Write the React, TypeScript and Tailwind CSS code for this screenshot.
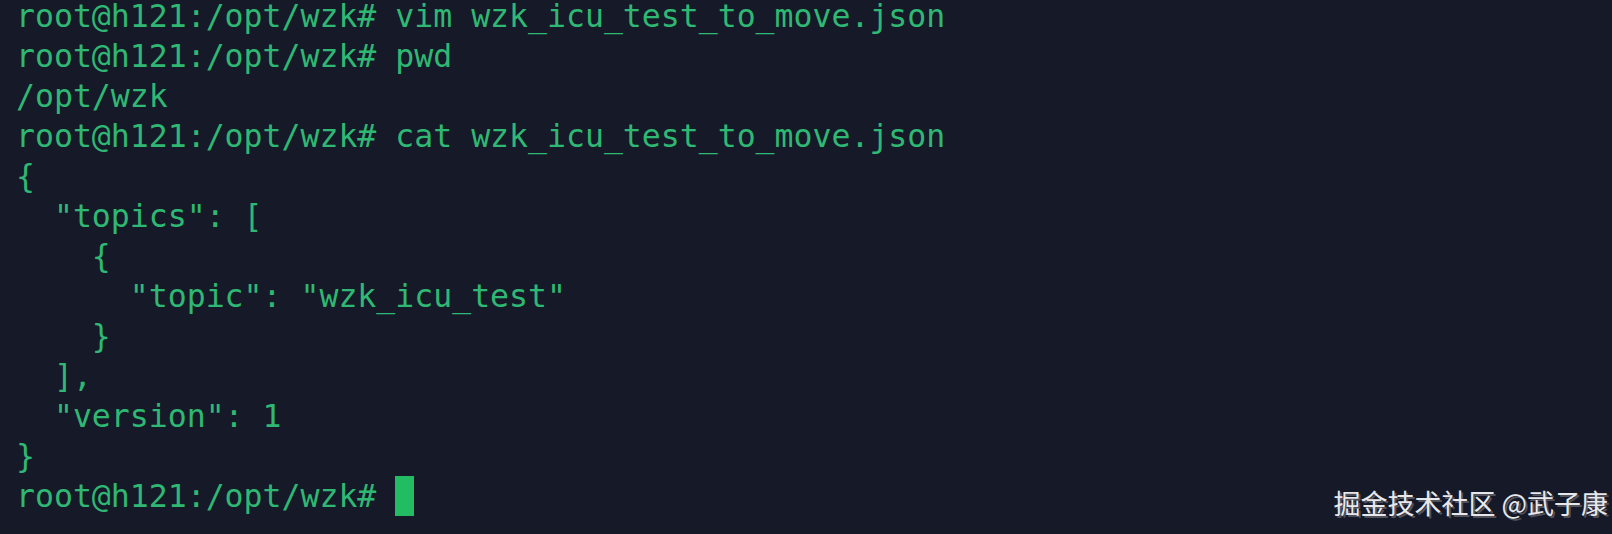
import React from "react";

const lines = [
	"root@h121:/opt/wzk# vim wzk_icu_test_to_move.json",
	"root@h121:/opt/wzk# pwd",
	"/opt/wzk",
	"root@h121:/opt/wzk# cat wzk_icu_test_to_move.json",
	"{",
	'  "topics": [',
	"    {",
	'      "topic": "wzk_icu_test"',
	"    }",
	"  ],",
	'  "version": 1',
	"}",
];

export default function App() {
	return (
		<div className="relative h-[534px] w-full overflow-hidden bg-[#151928]">
			<div
				className="mt-[-4px] pl-[16px] text-[31.5px] leading-[40px] text-[#2fb873] whitespace-pre"
				style={{ fontFamily: '"DejaVu Sans Mono", monospace' }}
			>
				{lines.map((line, i) => (
					<div key={i} className="h-[40px]">
						{line}
					</div>
				))}
				<div className="flex h-[40px] items-center">
					<span>root@h121:/opt/wzk# </span>
					<span className="h-[40px] w-[19px] bg-[#22bd62]" />
				</div>
			</div>
			<div
				className="absolute right-[4px] bottom-[18px] text-[27px] leading-none text-[#e8e8ea] [text-shadow:2px_2px_0_rgba(90,90,100,0.9)]"
				style={{ fontFamily: '"Noto Sans CJK SC", sans-serif' }}
			>
				掘金技术社区 @武子康
			</div>
		</div>
	);
}
